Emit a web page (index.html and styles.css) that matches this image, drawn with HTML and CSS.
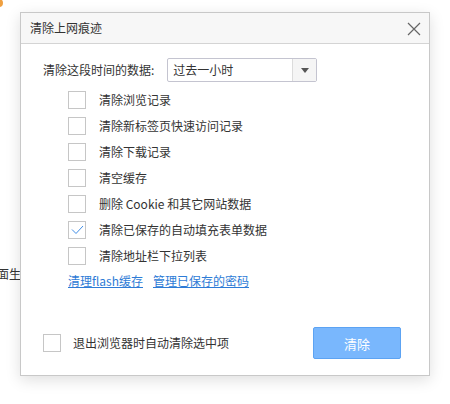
FILE: index.html
```html
<!DOCTYPE html>
<html lang="zh-CN">
<head>
<meta charset="utf-8">
<title>清除上网痕迹</title>
<link rel="stylesheet" href="styles.css">
</head>
<body>
<div class="bg-dot"></div>
<div class="bg-text">画面生成</div>
<div class="dialog">
  <div class="dlg-head">
    <span class="dlg-title">清除上网痕迹</span>
    <svg class="dlg-close" width="14" height="14" viewBox="0 0 14 14"><path d="M1 1 L13 13 M13 1 L1 13" stroke="#666" stroke-width="1.2" fill="none"/></svg>
  </div>
  <div class="dlg-body">
    <div class="range-row">
      <span class="range-label">清除这段时间的数据:</span>
      <div class="select">
        <span class="select-val">过去一小时</span>
        <span class="select-btn"><svg width="8" height="5" viewBox="0 0 8 5"><path d="M0 0 L8 0 L4 5 Z" fill="#555"/></svg></span>
      </div>
    </div>
    <ul class="opts">
      <li class="opt"><span class="cb"></span><span>清除浏览记录</span></li>
      <li class="opt"><span class="cb"></span><span>清除新标签页快速访问记录</span></li>
      <li class="opt"><span class="cb"></span><span>清除下载记录</span></li>
      <li class="opt"><span class="cb"></span><span>清空缓存</span></li>
      <li class="opt"><span class="cb"></span><span>删除 Cookie 和其它网站数据</span></li>
      <li class="opt"><span class="cb"><svg width="15" height="15" viewBox="0 0 15 15"><path d="M2 6.5 L6 10.5 L13 3" stroke="#3f8de6" stroke-width="1" fill="none"/></svg></span><span>清除已保存的自动填充表单数据</span></li>
      <li class="opt"><span class="cb"></span><span>清除地址栏下拉列表</span></li>
    </ul>
    <div class="links">
      <a class="link" href="#">清理flash缓存</a>
      <a class="link" href="#">管理已保存的密码</a>
    </div>
  </div>
  <div class="dlg-foot">
    <label class="auto"><span class="cb"></span><span>退出浏览器时自动清除选中项</span></label>
    <button class="btn">清除</button>
  </div>
</div>
</body>
</html>
```
FILE: styles.css
```css
* { box-sizing: border-box; }
html, body { margin: 0; padding: 0; background: #fff; }
body {
  position: relative;
  width: 450px;
  height: 404px;
  overflow: hidden;
  font-family: "Noto Sans CJK SC", "Noto Sans", sans-serif;
  font-size: 12px;
  color: #333;
  padding-top: 12px;
  padding-left: 20px;
}
.bg-dot {
  position: absolute;
  left: -5px;
  top: -1px;
  width: 8px;
  height: 8px;
  border-radius: 50%;
  background: #f0a040;
}
.bg-text {
  position: absolute;
  left: -15px;
  top: 266px;
  font-size: 12px;
  line-height: 16px;
  color: #333;
  white-space: nowrap;
}
.dialog {
  position: relative;
  z-index: 1;
  width: 410px;
  height: 364px;
  border: 1px solid #c8c8c8;
  background: #fff;
  box-shadow: 0 4px 14px rgba(0,0,0,0.13);
  display: flex;
  flex-direction: column;
}
.dlg-head {
  height: 31px;
  background: #f7f7f7;
  border-bottom: 1px solid #d4d4d4;
  display: flex;
  align-items: center;
  justify-content: space-between;
  padding: 0 8px 0 9px;
}
.dlg-title { font-size: 12px; line-height: 16px; color: #333; }
.dlg-close { display: block; margin-top: 1px; }
.dlg-body { padding: 14px 0 0 22px; }
.range-row { display: flex; align-items: center; gap: 13px; }
.range-label { line-height: 16px; }
.select {
  width: 150px;
  height: 24px;
  border: 1px solid #c4c4d0;
  border-radius: 2px;
  display: flex;
  align-items: stretch;
}
.select-val { flex: 1; padding-left: 5px; line-height: 22px; }
.select-btn {
  width: 24px;
  background: #f5f5f5;
  border-left: 1px solid #dcdcdc;
  display: flex;
  align-items: center;
  justify-content: center;
}
.select-btn svg { display: block; }
.opts { list-style: none; margin: 5px 0 0 25px; padding: 0; }
.opt { height: 26px; display: flex; align-items: center; gap: 13px; line-height: 16px; }
.cb {
  width: 18px;
  height: 18px;
  border: 1px solid #c6c6c6;
  background: #fff;
  flex: none;
  display: flex;
  align-items: center;
  justify-content: center;
}
.cb svg { display: block; }
.links { margin: 4px 0 0 25px; display: flex; gap: 10px; line-height: 16px; }
.link { color: #2d7bd6; text-decoration: underline; }
.dlg-foot {
  margin-top: auto;
  padding: 0 28px 16px 22px;
  display: flex;
  align-items: center;
  justify-content: space-between;
}
.auto { display: flex; align-items: center; gap: 12px; line-height: 16px; }
.btn {
  width: 88px;
  height: 32px;
  background: #79b7fd;
  border: 1px solid #5ca3f3;
  border-radius: 2px;
  color: #fff;
  font-family: inherit;
  font-size: 13px;
  padding: 0;
}
```
